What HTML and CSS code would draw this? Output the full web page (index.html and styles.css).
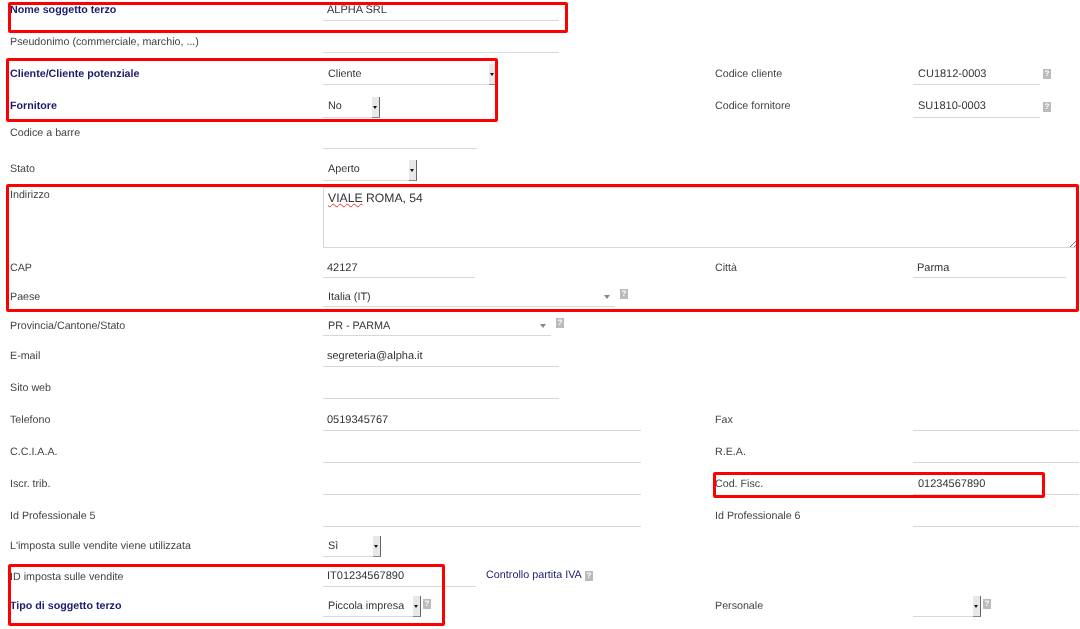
FILE: index.html
```html
<!DOCTYPE html>
<html lang="it">
<head>
<meta charset="utf-8">
<title>Soggetto terzo</title>
<link rel="stylesheet" href="styles.css">
</head>
<body>
<form class="form">
  <div class="label req">Nome soggetto terzo</div>
  <div class="field"><div class="line w236">ALPHA SRL</div></div>

  <div class="label">Pseudonimo (commerciale, marchio, ...)</div>
  <div class="field"><div class="line w236"></div></div>

  <div class="label req">Cliente/Cliente potenziale</div>
  <div class="field"><div class="line select w174"><span>Cliente</span><span class="btn"></span></div></div>
  <div class="label right">Codice cliente</div>
  <div class="field with-help"><div class="line inset w127">CU1812-0003</div><span class="help gap7">?</span></div>

  <div class="label req raised1">Fornitore</div>
  <div class="field"><div class="line select up w57"><span>No</span><span class="btn"></span></div></div>
  <div class="label right raised1">Codice fornitore</div>
  <div class="field with-help"><div class="line inset up-text w127">SU1810-0003</div><span class="help gap7">?</span></div>

  <div class="label high">Codice a barre</div>
  <div class="field"><div class="line w154"></div></div>

  <div class="label raised1">Stato</div>
  <div class="field"><div class="line select up w94"><span>Aperto</span><span class="btn"></span></div></div>

  <div class="label top">Indirizzo</div>
  <div class="field wide"><div class="textarea"><span class="typo">VIALE</span> ROMA, 54
    <svg class="grip" width="9" height="9" viewBox="0 0 9 9"><path d="M1 9 9 1M5 9 9 5" stroke="#777" fill="none"/></svg>
  </div></div>

  <div class="label low1">CAP</div>
  <div class="field"><div class="line down w152">42127</div></div>
  <div class="label right low1">Città</div>
  <div class="field"><div class="line down w153">Parma</div></div>

  <div class="label low1">Paese</div>
  <div class="field with-help"><div class="line combo w292"><span>Italia (IT)</span><span class="caret"></span></div><span class="help raised">?</span></div>

  <div class="label low1">Provincia/Cantone/Stato</div>
  <div class="field with-help"><div class="line combo w228"><span>PR - PARMA</span><span class="caret"></span></div><span class="help raised">?</span></div>

  <div class="label">E-mail</div>
  <div class="field"><div class="line w236">segreteria@alpha.it</div></div>

  <div class="label">Sito web</div>
  <div class="field"><div class="line w236"></div></div>

  <div class="label">Telefono</div>
  <div class="field"><div class="line w318">0519345767</div></div>
  <div class="label right">Fax</div>
  <div class="field"><div class="line"></div></div>

  <div class="label">C.C.I.A.A.</div>
  <div class="field"><div class="line w318"></div></div>
  <div class="label right">R.E.A.</div>
  <div class="field"><div class="line"></div></div>

  <div class="label">Iscr. trib.</div>
  <div class="field"><div class="line w318"></div></div>
  <div class="label right">Cod. Fisc.</div>
  <div class="field"><div class="line inset">01234567890</div></div>

  <div class="label">Id Professionale 5</div>
  <div class="field"><div class="line w318"></div></div>
  <div class="label right">Id Professionale 6</div>
  <div class="field"><div class="line"></div></div>

  <div class="label">L'imposta sulle vendite viene utilizzata</div>
  <div class="field"><div class="line select w58"><span>Sì</span><span class="btn"></span></div></div>

  <div class="label low1">ID imposta sulle vendite</div>
  <div class="field with-help"><div class="line w153">IT01234567890</div><a class="link">Controllo partita IVA</a><span class="help gap3">?</span></div>

  <div class="label req">Tipo di soggetto terzo</div>
  <div class="field with-help"><div class="line select w98"><span>Piccola impresa</span><span class="btn"></span></div><span class="help raised gap1">?</span></div>
  <div class="label right">Personale</div>
  <div class="field with-help"><div class="line select w68"><span></span><span class="btn"></span></div><span class="help raised gap1">?</span></div>
</form>

<div class="mark m1"></div>
<div class="mark m2"></div>
<div class="mark m3"></div>
<div class="mark m4"></div>
<div class="mark m5"></div>
</body>
</html>
```
FILE: styles.css
```css
html, body {
  margin: 0;
  background: #fff;
}
body {
  position: relative;
  height: 629px;
  overflow: hidden;
  font-family: "Liberation Sans", Arial, sans-serif;
  font-size: 10.7px;
  color: #444;
  text-rendering: geometricPrecision;
  filter: blur(0.35px);
}
.form {
  display: grid;
  grid-template-columns: 323px 392px 198px 166px;
  grid-template-rows: 21px 32px 32px 33px 31px 32px 68px 29px 29px 29px 31px 32px 32px 32px 32px 32px 30px 30px 30px;
  align-items: end;
}
.label {
  grid-column: 1;
  padding: 0 0 4px 10px;
  line-height: 13px;
}
.label.right {
  grid-column: 3;
  padding-left: 0;
}
.label.req {
  color: #1b1b6f;
  font-weight: bold;
}
.label.high { padding-bottom: 9px; }
.label.raised1 { padding-bottom: 5px; }
.label.low1 { padding-bottom: 3px; }
.label.top { align-self: start; padding-top: 8px; }
.field { min-width: 0; }
.field.wide { grid-column: 2 / -1; }
.field.with-help {
  display: flex;
  align-items: flex-end;
}
.line {
  box-sizing: border-box;
  height: 21px;
  padding: 3px 0 0 4px;
  line-height: 15px;
  color: #333;
  border-bottom: 1px solid #d8d8d8;
  font-size: 11px;
}
.line.inset { padding-left: 5px; }
.line.down { padding-top: 4px; }
.line.up-text { padding-top: 2px; }
.w57 { width: 57px; }
.w58 { width: 58px; }
.w68 { width: 68px; }
.w94 { width: 94px; }
.w98 { width: 98px; }
.w127 { width: 127px; }
.w152 { width: 152px; }
.w153 { width: 153px; }
.w154 { width: 154px; }
.w174 { width: 174px; }
.w228 { width: 228px; }
.w236 { width: 236px; }
.w292 { width: 292px; }
.w318 { width: 318px; }
.select, .combo {
  display: flex;
  justify-content: space-between;
  align-items: flex-start;
}
.select { padding-top: 0; font-size: 10.8px; }
.select > span:first-child {
  margin: 3px 0 0 1px;
  line-height: 15px;
}
.select.up > span:first-child { margin-top: 2px; }
.combo { font-size: 10.8px; }
.combo > span:first-child { margin: 1px 0 0 1px; }
.btn {
  position: relative;
  box-sizing: border-box;
  width: 8px;
  height: 21px;
  background: #e8e8e8;
  border-right: 1px solid #666;
  border-bottom: 1px solid #888;
}
.btn::after {
  content: "";
  position: absolute;
  left: 1px;
  top: 9px;
  border: 2.5px solid transparent;
  border-top: 3px solid #111;
  border-bottom: 0;
}
.combo { padding-right: 5px; }
.caret {
  margin-top: 6px;
  border: 3.5px solid transparent;
  border-top: 4px solid #888;
  border-bottom: 0;
}
.help {
  flex: none;
  width: 8px;
  height: 10px;
  margin: 0 0 6px 5px;
  background: #bbb;
  color: #fff;
  font-size: 8px;
  font-weight: bold;
  line-height: 10px;
  text-align: center;
}
.help.raised { margin-bottom: 8px; }
.help.gap7 { margin-left: 3px; margin-bottom: 6px; }
.help.gap3 { margin-left: 3px; margin-bottom: 6px; }
.help.gap1 { margin-left: 2px; margin-bottom: 8px; }
.link {
  margin: 0 0 4px 10px;
  color: #1b1b6f;
  line-height: 15px;
  font-size: 10.8px;
}
.textarea {
  position: relative;
  box-sizing: border-box;
  height: 61px;
  margin-bottom: 1px;
  padding: 3px 4px;
  border: 1px solid #d8d8d8;
  color: #333;
  font-size: 12.2px;
  line-height: 15px;
}
.typo { text-decoration: underline wavy #d33 1px; }
.grip {
  position: absolute;
  right: 0;
  bottom: 0;
}
.mark {
  position: absolute;
  box-sizing: border-box;
  border: 3px solid #f00;
  border-radius: 2px;
}
.m1 { left: 8px; top: 2px; width: 560px; height: 31px; }
.m2 { left: 6px; top: 58px; width: 492px; height: 64px; }
.m3 { left: 6px; top: 184px; width: 1073px; height: 128px; }
.m4 { left: 713px; top: 472px; width: 332px; height: 26px; }
.m5 { left: 8px; top: 564px; width: 437px; height: 62px; }
```
